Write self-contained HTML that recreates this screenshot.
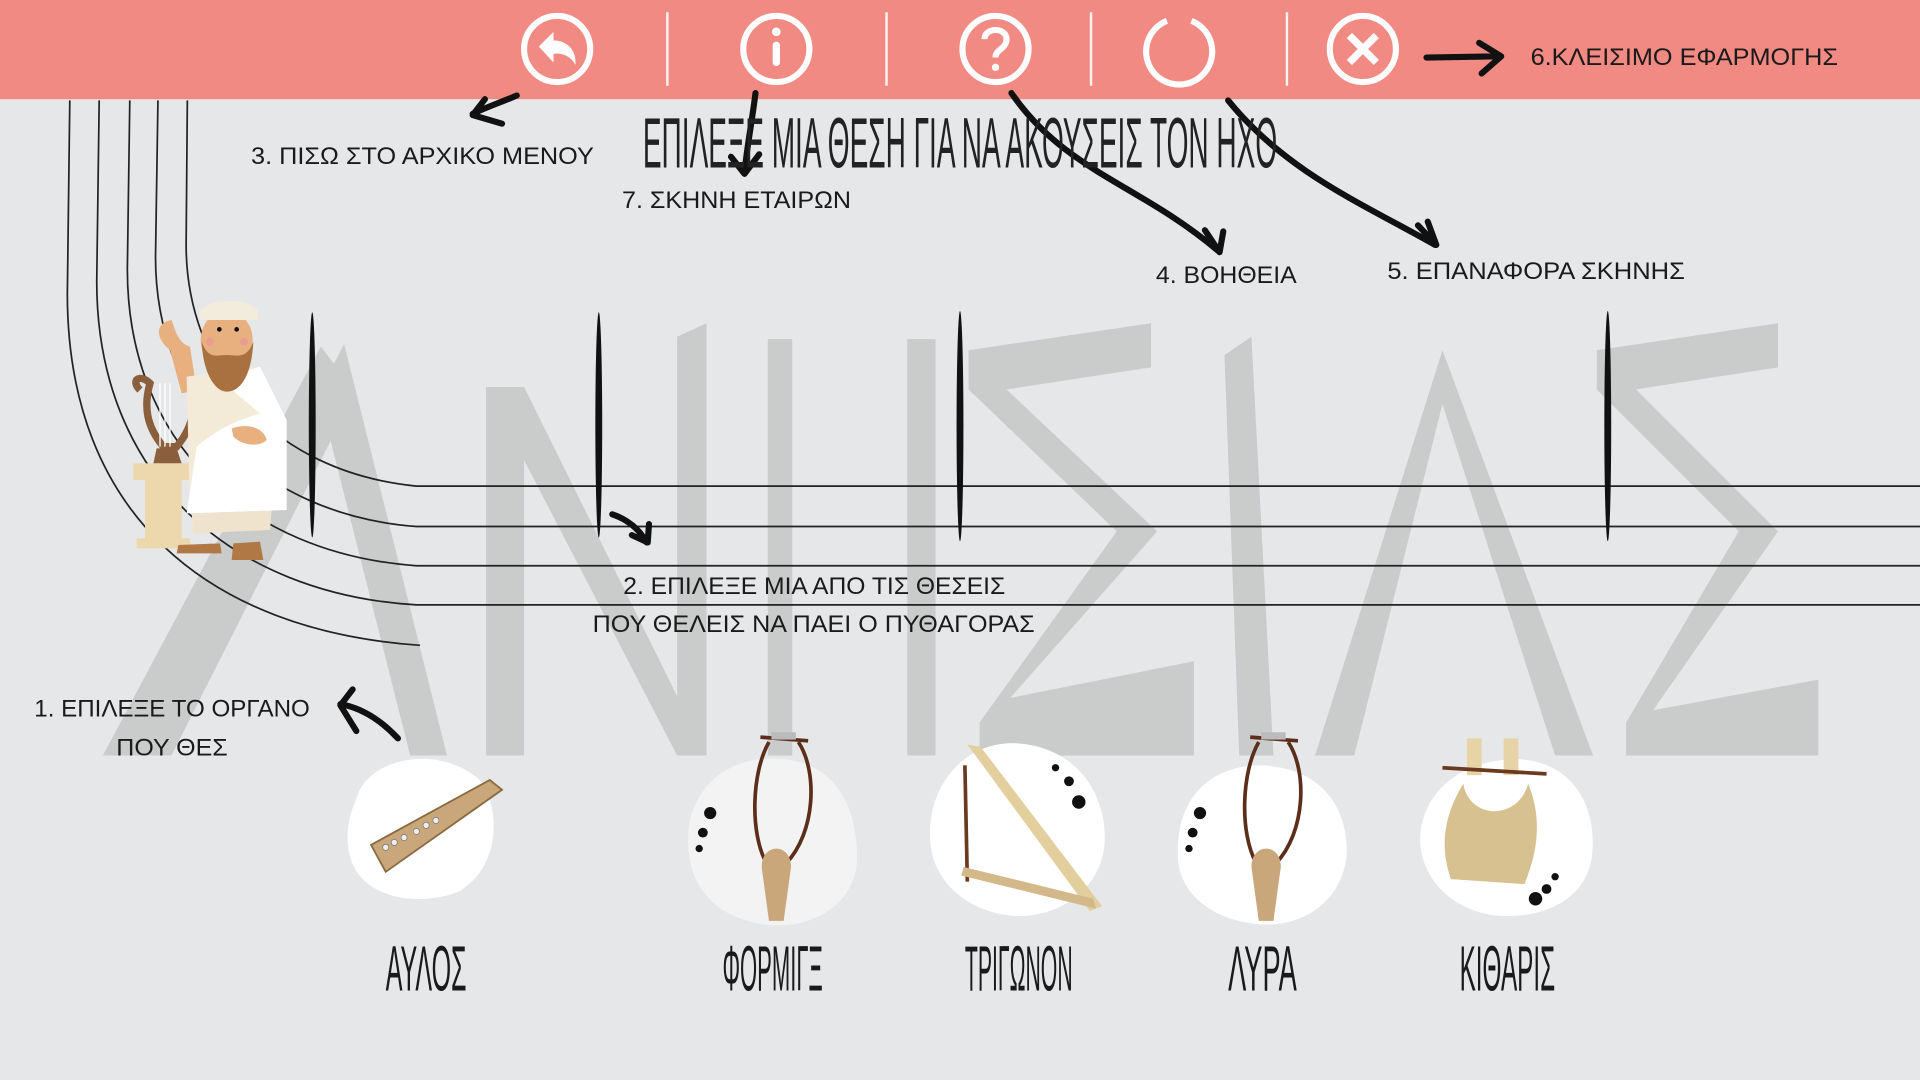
<!DOCTYPE html>
<html><head><meta charset="utf-8"><style>
html,body{margin:0;padding:0;background:#E6E7E9;overflow:hidden}
svg{display:block}
text{font-family:"Liberation Sans",sans-serif;fill:#1a1a1a}
</style></head><body>
<svg width="1920" height="1080" viewBox="0 0 1568 882" xmlns="http://www.w3.org/2000/svg">
<rect width="1568" height="882" fill="#E6E7E9"/>
<!-- watermark -->
<g fill="#CACBCB">
<polygon points="84,617 109,617 281,281 281,281 365,617 335,617 270,360 140,617"/>
<polygon points="84,617 118,617 275,300 262,283"/>
<polygon points="397,316 428,330 428,617 397,617"/>
<polygon points="397,316 428,316 577,617 553,617"/>
<polygon points="553,275 577,264 577,617 553,617"/>
<polygon points="627,277 647,277 647,617 627,617"/>
<polygon points="741,277 764,277 764,617 741,617"/>
<polygon points="791,286 940,264 940,300 822,318 945,434 825,570 975,540 975,617 800,617 800,590 912,434 791,318"/>
<polygon points="1000,290 1022,275 1040,617 1012,617"/>
<polygon points="1074,617 1106,617 1178,330 1270,617 1301,617 1178,286"/>
<polygon points="1304,286 1452,264 1452,300 1336,318 1452,434 1350,580 1485,555 1485,617 1328,617 1328,590 1420,434 1304,318"/>
</g>
<!-- staff curves -->
<g fill="none" stroke="#222" stroke-width="1.4">
<path d="M153,82 L152,200 C152,300 220,385 340,397 L1568,397"/>
<path d="M129,82 L127,210 C127,330 210,420 340,430 L1568,430"/>
<path d="M106,82 L104,220 C104,360 200,452 340,462 L1568,462"/>
<path d="M81,82 L79,230 C79,390 190,485 340,494 L1568,494"/>
<path d="M57,82 L55,240 C55,420 170,515 343,527"/>
</g>
<g fill="#111">
<ellipse cx="255" cy="347" rx="2.8" ry="92"/>
<ellipse cx="489" cy="347" rx="2.8" ry="92"/>
<ellipse cx="784" cy="348" rx="2.8" ry="94"/>
<ellipse cx="1313" cy="348" rx="2.8" ry="94"/>
</g>
<!-- top bar -->
<rect x="0" y="0" width="1568" height="81" fill="#F08A82"/>
<g stroke="#fff" stroke-width="2" opacity="0.9">
<line x1="545" y1="10" x2="545" y2="70"/><line x1="724" y1="10" x2="724" y2="70"/>
<line x1="891" y1="10" x2="891" y2="70"/><line x1="1051" y1="10" x2="1051" y2="70"/>
</g>
<g fill="none" stroke="#fff" stroke-width="5">
<circle cx="455" cy="40" r="27"/>
<circle cx="634" cy="40" r="27"/>
<circle cx="813" cy="40" r="27"/>
<path d="M953,17 A27,27 0 1 0 973,17"/>
<circle cx="1113" cy="40" r="27"/>
</g>
<path d="M440,38 L452,26 L452,33 C463,33 471,41 470,53 C466,46 460,43 452,44 L452,51 Z" fill="#fff"/>
<rect x="631" y="34" width="6" height="20" rx="3" fill="#fff"/><circle cx="634" cy="26" r="3.5" fill="#fff"/>
<path d="M804,32 C804,22 822,22 822,32 C822,40 813,40 813,47" fill="none" stroke="#fff" stroke-width="5"/>
<circle cx="813" cy="55" r="3" fill="#fff"/>
<path d="M1102,29 L1124,51 M1124,29 L1102,51" stroke="#fff" stroke-width="6"/>
<!-- arrows -->
<g fill="none" stroke="#111" stroke-width="5" stroke-linecap="round" stroke-linejoin="round">
<path d="M1165,47 L1224,46 M1208,35 L1226,46 L1210,60"/>
<path d="M422,78 C408,84 396,88 386,93 M396,81 L386,94 L410,101"/>
<path d="M617,76 C614,100 610,120 608,141 M597,128 L608,142 L620,126"/>
<path d="M826,76 C870,140 930,150 995,205 M984,188 L996,206 L999,189"/>
<path d="M1003,82 C1050,140 1110,165 1172,200 M1158,184 L1173,200 L1166,181"/>
<path d="M500,420 C512,424 522,432 528,443 M530,428 L529,443 L516,437"/>
<path d="M325,603 C310,587 295,578 278,575 M288,563 L278,576 L291,597"/>
</g>
<g font-size="20">
<text x="205" y="134" textLength="280" lengthAdjust="spacingAndGlyphs">3. ΠΙΣΩ ΣΤΟ ΑΡΧΙΚΟ ΜΕΝΟΥ</text>
<text x="508" y="170" textLength="187" lengthAdjust="spacingAndGlyphs">7. ΣΚΗΝΗ ΕΤΑΙΡΩΝ</text>
<text x="944" y="231" textLength="115" lengthAdjust="spacingAndGlyphs">4. ΒΟΗΘΕΙΑ</text>
<text x="1133" y="228" textLength="243" lengthAdjust="spacingAndGlyphs">5. ΕΠΑΝΑΦΟΡΑ ΣΚΗΝΗΣ</text>
<text x="1250" y="53" textLength="251" lengthAdjust="spacingAndGlyphs">6.ΚΛΕΙΣΙΜΟ ΕΦΑΡΜΟΓΗΣ</text>
<text x="509" y="485" textLength="312" lengthAdjust="spacingAndGlyphs">2. ΕΠΙΛΕΞΕ ΜΙΑ ΑΠΟ ΤΙΣ ΘΕΣΕΙΣ</text>
<text x="484" y="516" textLength="361" lengthAdjust="spacingAndGlyphs">ΠΟΥ ΘΕΛΕΙΣ ΝΑ ΠΑΕΙ Ο ΠΥΘΑΓΟΡΑΣ</text>
<text x="28" y="585" textLength="225" lengthAdjust="spacingAndGlyphs">1. ΕΠΙΛΕΞΕ ΤΟ ΟΡΓΑΝΟ</text>
<text x="95" y="617" textLength="91" lengthAdjust="spacingAndGlyphs">ΠΟΥ ΘΕΣ</text>
</g>
<g transform="scale(1,2)">
<text x="525" y="68.5" font-size="29" textLength="518" lengthAdjust="spacingAndGlyphs" style="fill:#222">ΕΠΙΛΕΞΕ ΜΙΑ ΘΕΣΗ ΓΙΑ ΝΑ ΑΚΟΥΣΕΙΣ ΤΟΝ ΗΧΟ</text>
</g>
<!-- Pythagoras -->
<g transform="scale(0.8167) translate(120,280) scale(0.3333)">
<path d="M60,330 C30,300 60,280 90,310 C70,380 80,440 130,500 L170,500 C220,440 230,380 210,310" fill="none" stroke="#8B5E3C" stroke-width="22"/>
<path d="M190,310 C215,290 225,320 205,335" fill="none" stroke="#8B5E3C" stroke-width="22"/>
<line x1="120" y1="310" x2="120" y2="500" stroke="#fff" stroke-width="4"/><line x1="135" y1="310" x2="135" y2="500" stroke="#fff" stroke-width="4"/><line x1="150" y1="310" x2="150" y2="500" stroke="#fff" stroke-width="4"/>
<path d="M110,505 L170,505 L185,550 L100,550 Z" fill="#8B5E3C"/>
<rect x="40" y="550" width="170" height="50" fill="#EDD7AC"/>
<rect x="75" y="600" width="110" height="180" fill="#EDD7AC"/>
<rect x="50" y="775" width="160" height="30" fill="#EDD7AC"/>
<path d="M150,210 C110,180 100,130 155,120 C165,150 175,190 210,200 L230,330 L185,340 Z" fill="#E8B07F"/>
<path d="M200,290 L420,260 L470,380 L500,680 L210,700 Z" fill="#F4EAD8"/>
<path d="M210,640 L460,630 L450,750 L220,760 Z" fill="#EFE3CE"/>
<path d="M300,300 L420,260 L500,420 L500,690 L200,700 L230,500 C300,440 360,420 420,400 Z" fill="#fff"/>
<ellipse cx="320" cy="180" rx="78" ry="88" fill="#E8B07F"/>
<path d="M245,185 C250,290 290,335 320,335 C360,335 395,290 400,185 C380,240 350,225 320,225 C290,225 265,240 245,185 Z" fill="#A8713F"/>
<path d="M240,100 C240,55 410,45 415,100 L412,120 L240,120 Z" fill="#F3EBDC"/>
<circle cx="298" cy="148" r="7" fill="#111"/><circle cx="350" cy="148" r="7" fill="#111"/>
<circle cx="270" cy="185" r="12" fill="#E79E8E"/><circle cx="372" cy="185" r="12" fill="#E79E8E"/>
<path d="M335,445 C380,430 430,440 440,480 C420,500 370,500 340,470 Z" fill="#E8B07F"/>
<path d="M175,795 L300,790 L305,820 L170,820 Z" fill="#B07845"/>
<path d="M340,790 L420,785 L430,840 L335,840 Z" fill="#B07845"/>
</g>
<!-- instruments -->
<path d="M292,650 C300,620 360,605 395,640 C410,670 405,710 375,728 C345,740 305,735 290,710 C280,690 283,670 292,650 Z" fill="#fff"/>
<path d="M562,690 C560,640 600,615 640,620 C690,625 700,670 700,700 C700,740 660,760 625,755 C585,750 563,725 562,690 Z" fill="#F3F3F3"/>
<path d="M760,690 C755,640 790,605 830,607 C880,610 905,650 902,690 C898,730 860,750 828,748 C790,745 763,720 760,690 Z" fill="#fff"/>
<path d="M962,700 C960,650 990,625 1030,625 C1080,627 1100,660 1100,695 C1098,735 1065,757 1030,755 C990,752 963,730 962,700 Z" fill="#fff"/>
<path d="M1160,680 C1165,640 1200,620 1240,620 C1285,622 1305,660 1300,700 C1295,735 1260,750 1225,748 C1185,745 1157,715 1160,680 Z" fill="#fff"/>
<path d="M303,690 L400,637 L410,645 L315,712 Z" fill="#C9A77A" stroke="#8B6A42" stroke-width="1.5"/>
<g fill="#eee" stroke="#777" stroke-width="0.6"><circle cx="315" cy="692" r="2.5"/><circle cx="322" cy="688" r="2.5"/><circle cx="330" cy="684" r="2.5"/><circle cx="340" cy="679" r="2.5"/><circle cx="348" cy="674" r="2.5"/><circle cx="356" cy="670" r="2.5"/></g>
<g id="ly">
<path d="M628,606 C614,630 612,680 626,705 M652,606 C668,630 666,680 642,705" fill="none" stroke="#5A2E1A" stroke-width="3"/>
<path d="M621,602 L660,605" stroke="#5A2E1A" stroke-width="3"/>
<rect x="630" y="598" width="20" height="6" fill="#bbb"/>
<path d="M622,708 C622,688 646,688 646,708 L640,752 L628,752 Z" fill="#C9A77A"/>
</g>
<use href="#ly" transform="translate(400,0)"/>
<g fill="#111"><circle cx="580" cy="664" r="5"/><circle cx="574" cy="680" r="4"/><circle cx="571" cy="693" r="3"/>
<circle cx="980" cy="664" r="5"/><circle cx="974" cy="680" r="4"/><circle cx="971" cy="693" r="3"/>
<circle cx="862" cy="627" r="3"/><circle cx="873" cy="638" r="4"/><circle cx="881" cy="655" r="5.5"/>
<circle cx="1270" cy="716" r="3"/><circle cx="1263" cy="726" r="4"/><circle cx="1254" cy="734" r="5.5"/></g>
<path d="M790,608 L801,610 L900,740 L890,744 Z" fill="#E3CE9E"/>
<path d="M788,625 L790,720" stroke="#6A3A20" stroke-width="3"/>
<path d="M785,715 L895,742 L893,734 L787,708 Z" fill="#D3B98A"/>
<rect x="1198" y="603" width="12" height="30" fill="#E6D3A6"/><rect x="1228" y="603" width="12" height="30" fill="#E6D3A6"/>
<path d="M1178,627 L1263,632" stroke="#6A3A20" stroke-width="3"/>
<path d="M1195,640 C1180,665 1175,690 1185,718 L1245,722 C1258,690 1258,665 1248,640 C1240,670 1200,670 1195,640 Z" fill="#D8C190"/>
<g transform="scale(1,2)" font-size="26" style="fill:#2a2a2a">
<text x="315" y="404.5" textLength="66" lengthAdjust="spacingAndGlyphs">ΑΥΛΟΣ</text>
<text x="590" y="404.5" textLength="82" lengthAdjust="spacingAndGlyphs">ΦΟΡΜΙΓΞ</text>
<text x="788" y="404.5" textLength="88" lengthAdjust="spacingAndGlyphs">ΤΡΙΓΩΝΟΝ</text>
<text x="1003" y="404.5" textLength="56" lengthAdjust="spacingAndGlyphs">ΛΥΡΑ</text>
<text x="1192" y="404.5" textLength="78" lengthAdjust="spacingAndGlyphs">ΚΙΘΑΡΙΣ</text>
</g>
</svg>
</body></html>
